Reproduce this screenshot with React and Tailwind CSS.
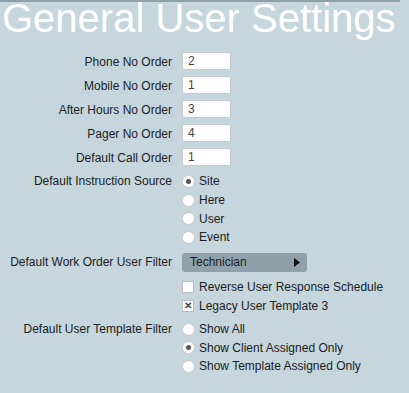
const inputs = [
  { label: 'Phone No Order', value: '2' },
  { label: 'Mobile No Order', value: '1' },
  { label: 'After Hours No Order', value: '3' },
  { label: 'Pager No Order', value: '4' },
  { label: 'Default Call Order', value: '1' },
];

const Radio = ({ checked, label }) => (
  <div className="flex items-center h-[18.7px]">
    <span className="w-[13px] h-[13px] rounded-full bg-white border border-[#c9c9c9] flex items-center justify-center">
      {checked && <span className="w-[5px] h-[5px] rounded-full bg-[#555]"></span>}
    </span>
    <span className="ml-[4px]">{label}</span>
  </div>
);

const Checkbox = ({ checked, label }) => (
  <div className="flex items-center h-[19px]">
    <span className="w-[12px] h-[12px] bg-white border border-[#bdbdbd] flex items-center justify-center text-[10px] leading-none font-bold text-[#444]">
      {checked && '✕'}
    </span>
    <span className="ml-[5px]">{label}</span>
  </div>
);

export default function App() {
  return (
    <div className="w-[409px] h-[393px] bg-[#c5d6dd] overflow-hidden text-[12px] text-[#1c1c1c]" style={{ fontFamily: '"Liberation Sans", Arial, sans-serif' }}>
      <div className="w-[400px] border-t-2 border-[#8ea1a9]"></div>
      <div className="h-[48px] pl-[2px] pt-[1px] text-white text-[40px] leading-[30px] whitespace-nowrap">
        General User Settings
      </div>

      <div className="grid grid-cols-[172px_1fr] gap-x-[10px]">
        {inputs.map((row, i) => (
          <div key={i} className="contents">
            <div className="h-[24px] flex items-center justify-end">{row.label}</div>
            <div className="h-[24px] flex items-center">
              <div className="w-[49px] h-[18px] bg-white border border-[#c2c8cb] rounded-[2px] pl-[5px] flex items-center text-[#444] -mt-[2px]">
                {row.value}
              </div>
            </div>
          </div>
        ))}

        <div className="mt-[2px] h-[18.7px] flex items-center justify-end">Default Instruction Source</div>
        <div className="mt-[2px]">
          <Radio checked label="Site" />
          <Radio label="Here" />
          <Radio label="User" />
          <Radio label="Event" />
        </div>

        <div className="mt-[6px] h-[19px] flex items-center justify-end">Default Work Order User Filter</div>
        <div className="mt-[6px]">
          <div className="w-[125px] h-[19px] bg-[#8fa2ab] rounded-[3px] flex items-center justify-between pl-[8px] pr-[7px] text-[#1c1c1c]">
            <span>Technician</span>
            <svg width="6" height="9" viewBox="0 0 6 9"><path d="M0 0 L6 4.5 L0 9 Z" fill="#111" /></svg>
          </div>
          <div className="mt-[6px]">
            <Checkbox label="Reverse User Response Schedule" />
            <Checkbox checked label="Legacy User Template 3" />
          </div>
        </div>

        <div className="mt-[4px] h-[18.7px] flex items-center justify-end">Default User Template Filter</div>
        <div className="mt-[4px]">
          <Radio label="Show All" />
          <Radio checked label="Show Client Assigned Only" />
          <Radio label="Show Template Assigned Only" />
        </div>
      </div>
    </div>
  );
}
